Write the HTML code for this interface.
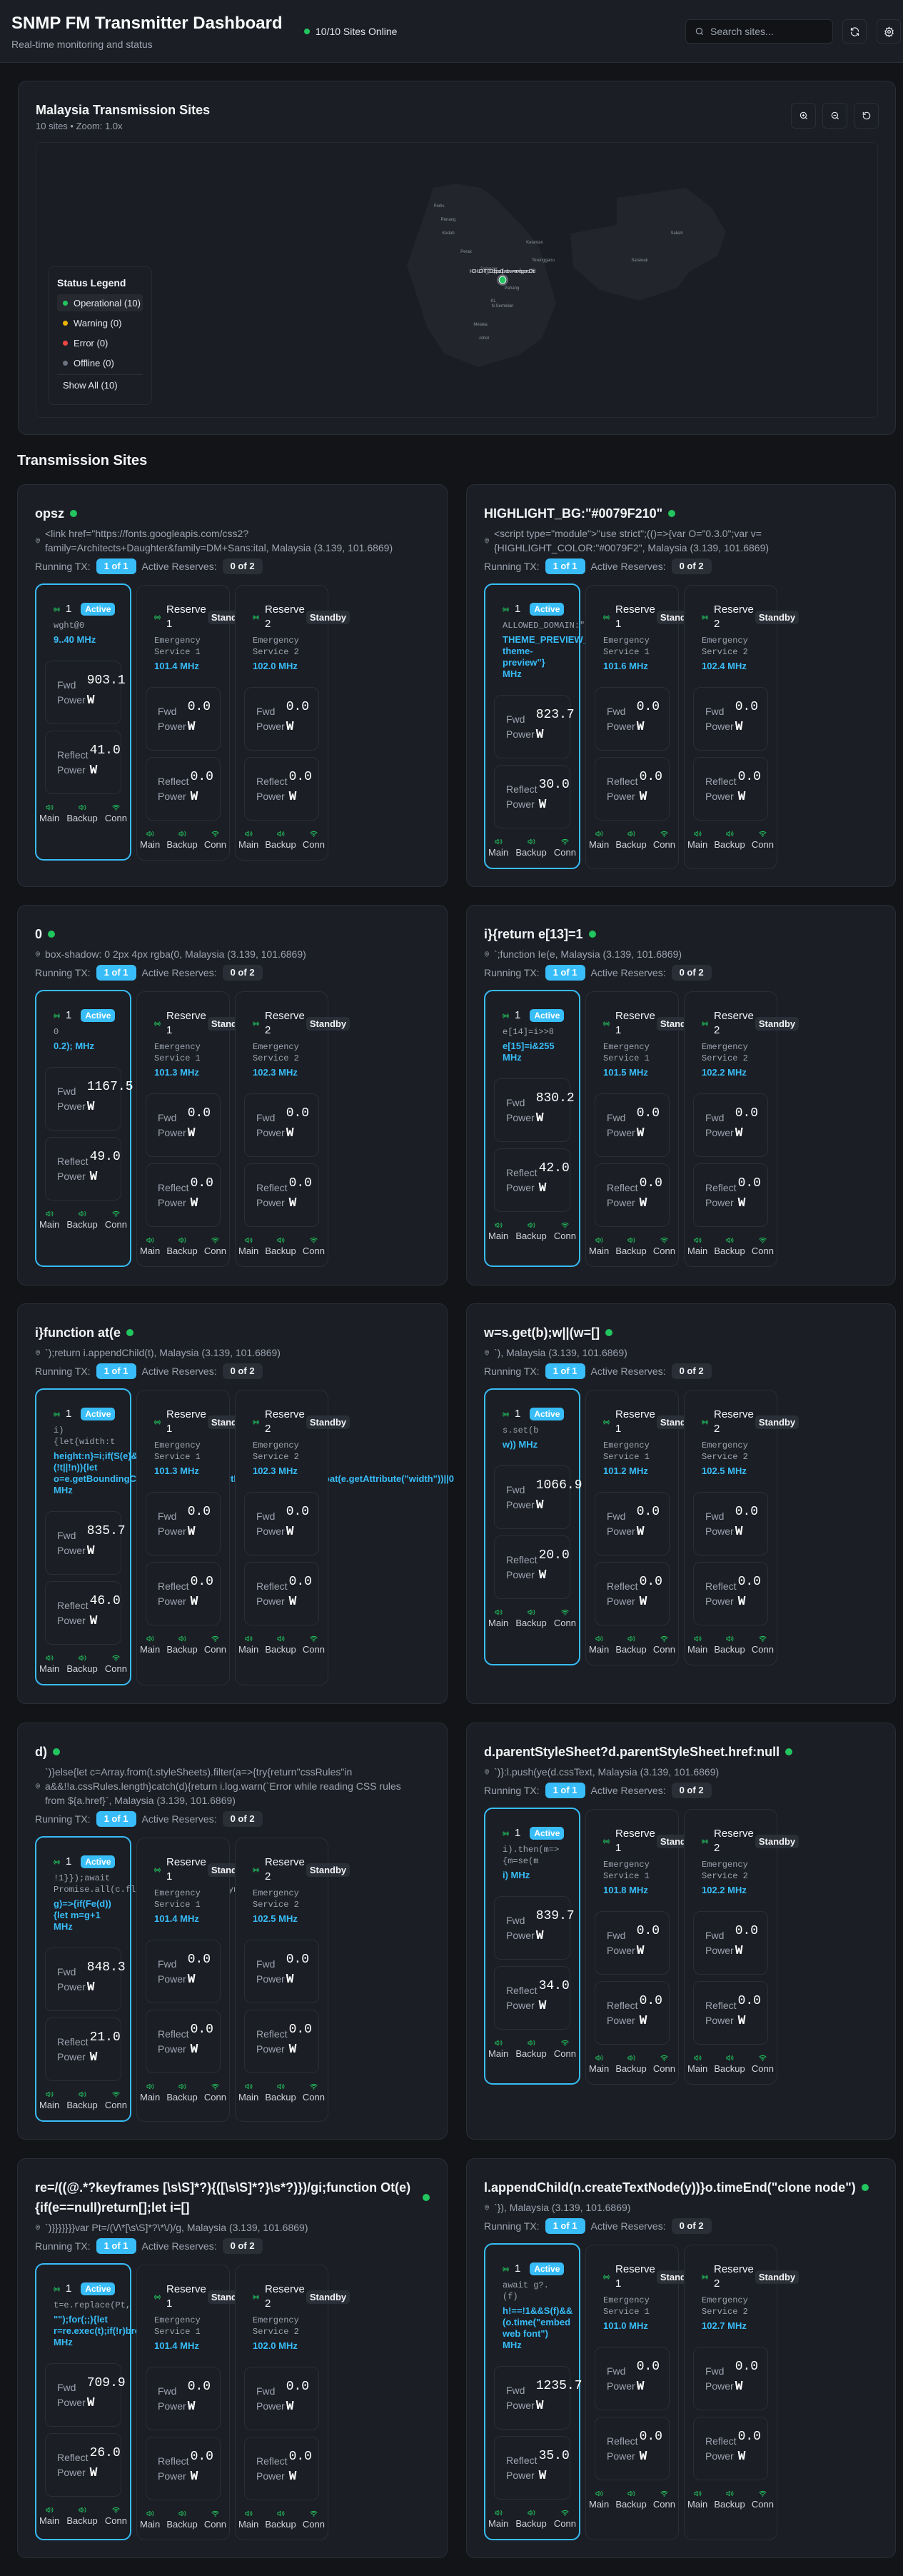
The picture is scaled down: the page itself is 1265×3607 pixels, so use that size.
<!DOCTYPE html>
<html><head><meta charset="utf-8">
<style>
*{box-sizing:border-box}
html,body{margin:0;padding:0}
body{width:1265px;height:3607px;background:#121418;font-family:"Liberation Sans",sans-serif;color:#f3f4f6;position:relative;overflow:hidden}
.mono{font-family:"Liberation Mono",monospace}
#hdr{position:absolute;left:0;top:0;width:1265px;height:88px;background:#1b1e25;border-bottom:1px solid #2a2e37}
#hdr h1{position:absolute;left:16px;top:17px;margin:0;font-size:24px;line-height:32px;font-weight:bold;color:#f9fafb;white-space:nowrap}
#hdr .sub{position:absolute;left:16px;top:52px;font-size:14px;line-height:20px;color:#9ca3af}
#hdr .onl{position:absolute;left:426px;top:35px;font-size:14px;line-height:18px;color:#e5e7eb;display:flex;align-items:center}
#hdr .onl i{width:8px;height:8px;border-radius:50%;background:#22c55e;margin-right:8px;display:inline-block}
.srch{position:absolute;left:960px;top:27px;width:207px;height:34px;background:#111317;border:1px solid #2a2e37;border-radius:6px;display:flex;align-items:center;padding-left:12px;font-size:14px;color:#9ca3af}
.srch svg{margin-right:8px}
.ibtn{position:absolute;top:27px;width:34px;height:34px;border:1px solid #2a2e37;border-radius:6px;background:#1b1e25;display:flex;align-items:center;justify-content:center}
.mapc{position:absolute;left:25px;top:113px;width:1230px;height:496px;background:#1b1e25;border:1px solid #2a2e37;border-radius:12px}
.mapc h2{position:absolute;left:24px;top:28px;margin:0;font-size:18px;line-height:24px;font-weight:bold;white-space:nowrap}
.mapc .ms{position:absolute;left:24px;top:55px;font-size:13px;line-height:16px;color:#9ca3af}
.zb{position:absolute;top:30px;width:35px;height:36px;border:1px solid #2a2e37;border-radius:6px;display:flex;align-items:center;justify-content:center}
.marea{position:absolute;left:24px;top:85px;width:1180px;height:386px;border:1px solid #252830;border-radius:8px;background:#1a1d23;overflow:hidden}
.leg{position:absolute;left:16px;top:173px;width:146px;height:194px;background:#1b1e25;border:1px solid #262a32;border-radius:8px;padding:10px 12px}
.leg b{display:block;font-size:14px;line-height:24px;margin-bottom:4px}
.li{display:flex;align-items:center;height:24px;font-size:13px;color:#e5e7eb;padding-left:8px;margin-bottom:4px;border-radius:4px}
.li i{width:7px;height:7px;border-radius:50%;display:inline-block;margin-right:8px}
.hs{position:absolute;left:24px;top:632px;font-size:20px;line-height:26px;font-weight:bold;color:#f3f4f6}
.card{position:absolute;background:#1b1e25;border:1px solid #2a2e37;border-radius:12px;padding:26px 24px 0 24px}
.ttl{display:flex;align-items:center;font-size:18px;font-weight:bold;line-height:28px;color:#f3f4f6}
.ttl .d{width:10px;height:10px;border-radius:50%;background:#22c55e;margin-left:8px;flex:none}
.loc{display:flex;align-items:center;margin-top:4px;font-size:14px;line-height:20px;color:#9ca3af}
.loc svg{flex:none;margin-right:6px}
.run{display:flex;align-items:center;height:26px;margin-top:3px;font-size:14px;color:#9ca3af;white-space:nowrap}
.b1,.b2{font-weight:bold;font-size:13px;height:22px;line-height:22px;padding:0 11px;border-radius:6px;margin:0 8px}
.b1{background:#38bdf8;color:#fff}
.b2{background:#2a2e37;color:#f3f4f6}
.txs{display:flex;gap:7px;margin-top:13px;align-items:stretch;margin-left:0}
.tx{position:relative;background:#1b1e25;border:1px solid #2a2e37;border-radius:12px;width:131px;padding:24px 12px 12px;flex:none}
.tx.act{border:2px solid #38bdf8;width:135px;padding-top:24px;margin-top:-2px}
.hd{display:flex;align-items:center;padding-left:12px;font-size:15px;line-height:20px;color:#f3f4f6;height:20px;white-space:nowrap}
.hd svg{flex:none;margin-right:8px}
.hd.r{height:40px;margin-top:-10px;margin-bottom:-10px}
.hd.r{margin:0}
.ab{background:#38bdf8;color:#fff;font-size:12px;font-weight:bold;line-height:18px;padding:0 6px;border-radius:5px;margin-left:13px}
.sb{background:#2a2e37;color:#f3f4f6;font-size:13px;font-weight:bold;line-height:19px;padding:0 5px;border-radius:5px;margin-left:2px}
.nm{padding-left:12px;margin-top:5px;font-family:"Liberation Mono",monospace;font-size:12px;line-height:16px;color:#9ca3af;white-space:nowrap}
.fq{padding-left:12px;margin-top:4px;font-size:13px;font-weight:bold;line-height:16px;color:#38bdf8;white-space:nowrap}
.pb{margin-top:21px;height:89px;border:1px solid #2a2e37;border-radius:10px;display:flex;align-items:center;padding-left:16px;white-space:nowrap}
.pb+.pb{margin-top:9px}
.pl{font-size:14px;line-height:21px;color:#9ca3af}
.pv{font-family:"Liberation Mono",monospace;font-size:18px;line-height:28px;color:#fff;margin-left:2px;margin-top:-6px}
.pv b{font-size:18px}
.st{display:flex;justify-content:space-between;margin:10px -8px 0}
.st div{text-align:center;font-size:13px;line-height:18px;color:#d1d5db}
.st svg{display:block;margin:3px auto 1px}
</style></head><body>

<svg width="0" height="0" style="position:absolute">
<defs>
<symbol id="rad" viewBox="0 0 24 24"><g fill="none" stroke="#22c55e" stroke-width="2.5" stroke-linecap="round"><circle cx="12" cy="12" r="2"/><path d="M16.2 7.8a6 6 0 0 1 0 8.4M7.8 16.2a6 6 0 0 1 0-8.4M19.1 4.9a10 10 0 0 1 0 14.2M4.9 19.1a10 10 0 0 1 0-14.2"/></g></symbol>
<symbol id="spk" viewBox="0 0 24 24"><g fill="none" stroke="#22c55e" stroke-width="2" stroke-linecap="round" stroke-linejoin="round"><path d="M11 5L6 9H2v6h4l5 4V5z"/><path d="M15.5 8.5a5 5 0 0 1 0 7M19 5a10 10 0 0 1 0 14"/></g></symbol>
<symbol id="wif" viewBox="0 0 24 24"><g fill="none" stroke="#22c55e" stroke-width="2.2" stroke-linecap="round"><path d="M5 12.5a10 10 0 0 1 14 0M8.5 16a5 5 0 0 1 7 0M2 9a15 15 0 0 1 20 0"/><circle cx="12" cy="19.5" r="0.8"/></g></symbol>
<symbol id="pin" viewBox="0 0 24 24"><g fill="none" stroke="#9ca3af" stroke-width="2"><path d="M20 10c0 6-8 12-8 12s-8-6-8-12a8 8 0 0 1 16 0z"/><circle cx="12" cy="10" r="3"/></g></symbol>
</defs></svg>

<div id="hdr">
<h1>SNMP FM Transmitter Dashboard</h1>
<div class="sub">Real-time monitoring and status</div>
<div class="onl"><i></i>10/10 Sites Online</div>
<div class="srch"><svg width="14" height="14" viewBox="0 0 24 24" fill="none" stroke="#9ca3af" stroke-width="2"><circle cx="11" cy="11" r="7"/><path d="M20 20l-4-4"/></svg>Search sites...</div>
<div class="ibtn" style="left:1180px"><svg width="15" height="15" viewBox="0 0 24 24" fill="none" stroke="#e5e7eb" stroke-width="2" stroke-linecap="round"><path d="M20 11a8 8 0 0 0-14.6-4.5M4 4v4h4M4 13a8 8 0 0 0 14.6 4.5M20 20v-4h-4"/></svg></div>
<div class="ibtn" style="left:1228px"><svg width="15" height="15" viewBox="0 0 24 24" fill="none" stroke="#e5e7eb" stroke-width="2"><circle cx="12" cy="12" r="3"/><path d="M12 2l2 3 3.5-1 .5 3.5 3 2-2 3 2 3-3 2-.5 3.5-3.5-1-2 3-2-3-3.5 1L6 18.5l-3-2 2-3-2-3 3-2L6.5 4 10 5z"/></svg></div>
</div>

<div class="mapc">
<h2>Malaysia Transmission Sites</h2>
<div class="ms">10 sites • Zoom: 1.0x</div>
<div class="zb" style="left:1082px"><svg width="14" height="14" viewBox="0 0 24 24" fill="none" stroke="#e5e7eb" stroke-width="2"><circle cx="11" cy="11" r="7"/><path d="M20 20l-4-4M11 8v6M8 11h6"/></svg></div>
<div class="zb" style="left:1126px"><svg width="14" height="14" viewBox="0 0 24 24" fill="none" stroke="#e5e7eb" stroke-width="2"><circle cx="11" cy="11" r="7"/><path d="M20 20l-4-4M8 11h6"/></svg></div>
<div class="zb" style="left:1170px"><svg width="14" height="14" viewBox="0 0 24 24" fill="none" stroke="#e5e7eb" stroke-width="2" stroke-linecap="round"><path d="M4 12a8 8 0 1 0 3-6.2M4 4v5h5"/></svg></div>
<div class="marea">
<svg width="1180" height="386" viewBox="50 199 1180 386" style="position:absolute;left:0;top:0">
<polygon points="606,262 637,256 673,262 694,278 735,320 754,344 778,423 758,473 726,496 669,513 621,494 597,456 569,371 597,290" fill="#22252c"/>
<polygon points="863,276 960,262 996,290 1016,324 1004,357 964,380 948,402 895,420 839,405 802,373 798,326 863,314" fill="#22252c"/>
<g font-family="Liberation Sans" font-size="6" fill="#8b9099" text-anchor="middle">
<text x="614" y="289">Perlis</text><text x="627" y="308">Penang</text><text x="627" y="327">Kedah</text><text x="748" y="340">Kelantan</text><text x="652" y="353">Perak</text><text x="760" y="365">Terengganu</text><text x="947" y="327">Sabah</text><text x="895" y="365">Sarawak</text><text x="684" y="377">Selangor</text><text x="716" y="404">Pahang</text><text x="690" y="422">KL</text><text x="703" y="429">N.Sembilan</text><text x="672" y="455">Melaka</text><text x="677" y="474">Johor</text>
</g>
<text x="657" y="381" font-family="Liberation Sans" font-size="7" fill="#e5e7eb" textLength="92">HIGHLIGHT_BG d) opsz 0 i}function w=s re=/ l.appendChild</text>
<circle cx="703" cy="391" r="7" fill="none" stroke="#9ca3af" stroke-width="1.5" opacity=".6"/>
<circle cx="703" cy="391" r="5" fill="#22c55e" stroke="#fff" stroke-width="1"/>
</svg>
<div class="leg">
<b>Status Legend</b>
<div class="li" style="background:#262930"><i style="background:#22c55e"></i>Operational (10)</div>
<div class="li"><i style="background:#eab308"></i>Warning (0)</div>
<div class="li"><i style="background:#ef4444"></i>Error (0)</div>
<div class="li"><i style="background:#6b7280"></i>Offline (0)</div>
<div style="border-top:1px solid #2a2e37;margin-top:2px;padding:7px 0 0 8px;font-size:13px;color:#e5e7eb">Show All (10)</div>
</div>
</div>
</div>

<div class="hs">Transmission Sites</div>

<!-- ROW 1 LEFT -->
<div class="card" style="left:24px;top:678px;width:603px;height:564px">
<div class="ttl">opsz<span class="d"></span></div>
<div class="loc"><svg width="8" height="8"><use href="#pin"/></svg><div>&lt;link href="https://fonts.googleapis.com/css2?<br>family=Architects+Daughter&amp;family=DM+Sans:ital, Malaysia (3.139, 101.6869)</div></div>
<div class="run">Running TX:<span class="b1">1 of 1</span>Active Reserves:<span class="b2">0 of 2</span></div>
<div class="txs">
<div class="tx act"><div class="hd"><svg width="9" height="9"><use href="#rad"/></svg>1<span class="ab">Active</span></div>
<div class="nm">wght@0</div><div class="fq">9..40 MHz</div>
<div class="pb"><div class="pl">Fwd<br>Power</div><div class="pv">903.1<br><b>W</b></div></div>
<div class="pb"><div class="pl">Reflect<br>Power</div><div class="pv">41.0<br><b>W</b></div></div>
<div class="st"><div><svg width="11" height="11"><use href="#spk"/></svg>Main</div><div><svg width="11" height="11"><use href="#spk"/></svg>Backup</div><div><svg width="11" height="11"><use href="#wif"/></svg>Conn</div></div></div>
<div class="tx"><div class="hd r"><svg width="9" height="9"><use href="#rad"/></svg><div>Reserve<br>1</div><span class="sb">Standby</span></div>
<div class="nm">Emergency<br>Service 1</div><div class="fq">101.4 MHz</div>
<div class="pb"><div class="pl">Fwd<br>Power</div><div class="pv">0.0<br><b>W</b></div></div>
<div class="pb"><div class="pl">Reflect<br>Power</div><div class="pv">0.0<br><b>W</b></div></div>
<div class="st"><div><svg width="11" height="11"><use href="#spk"/></svg>Main</div><div><svg width="11" height="11"><use href="#spk"/></svg>Backup</div><div><svg width="11" height="11"><use href="#wif"/></svg>Conn</div></div></div>
<div class="tx"><div class="hd r"><svg width="9" height="9"><use href="#rad"/></svg><div>Reserve<br>2</div><span class="sb">Standby</span></div>
<div class="nm">Emergency<br>Service 2</div><div class="fq">102.0 MHz</div>
<div class="pb"><div class="pl">Fwd<br>Power</div><div class="pv">0.0<br><b>W</b></div></div>
<div class="pb"><div class="pl">Reflect<br>Power</div><div class="pv">0.0<br><b>W</b></div></div>
<div class="st"><div><svg width="11" height="11"><use href="#spk"/></svg>Main</div><div><svg width="11" height="11"><use href="#spk"/></svg>Backup</div><div><svg width="11" height="11"><use href="#wif"/></svg>Conn</div></div></div>
</div></div>

<!-- ROW 1 RIGHT -->
<div class="card" style="left:653px;top:678px;width:602px;height:564px">
<div class="ttl">HIGHLIGHT_BG:"#0079F210"<span class="d"></span></div>
<div class="loc"><svg width="8" height="8"><use href="#pin"/></svg><div>&lt;script type="module"&gt;"use strict";(()=&gt;{var O="0.3.0";var v=<br>{HIGHLIGHT_COLOR:"#0079F2", Malaysia (3.139, 101.6869)</div></div>
<div class="run">Running TX:<span class="b1">1 of 1</span>Active Reserves:<span class="b2">0 of 2</span></div>
<div class="txs">
<div class="tx act"><div class="hd"><svg width="9" height="9"><use href="#rad"/></svg>1<span class="ab">Active</span></div>
<div class="nm">ALLOWED_DOMAIN:"replit.com"</div><div class="fq">THEME_PREVIEW_STYLE_ID:<br>theme-<br>preview"}<br>MHz</div>
<div class="pb"><div class="pl">Fwd<br>Power</div><div class="pv">823.7<br><b>W</b></div></div>
<div class="pb"><div class="pl">Reflect<br>Power</div><div class="pv">30.0<br><b>W</b></div></div>
<div class="st"><div><svg width="11" height="11"><use href="#spk"/></svg>Main</div><div><svg width="11" height="11"><use href="#spk"/></svg>Backup</div><div><svg width="11" height="11"><use href="#wif"/></svg>Conn</div></div></div>
<div class="tx"><div class="hd r"><svg width="9" height="9"><use href="#rad"/></svg><div>Reserve<br>1</div><span class="sb">Standby</span></div>
<div class="nm">Emergency<br>Service 1</div><div class="fq">101.6 MHz</div>
<div class="pb"><div class="pl">Fwd<br>Power</div><div class="pv">0.0<br><b>W</b></div></div>
<div class="pb"><div class="pl">Reflect<br>Power</div><div class="pv">0.0<br><b>W</b></div></div>
<div class="st"><div><svg width="11" height="11"><use href="#spk"/></svg>Main</div><div><svg width="11" height="11"><use href="#spk"/></svg>Backup</div><div><svg width="11" height="11"><use href="#wif"/></svg>Conn</div></div></div>
<div class="tx"><div class="hd r"><svg width="9" height="9"><use href="#rad"/></svg><div>Reserve<br>2</div><span class="sb">Standby</span></div>
<div class="nm">Emergency<br>Service 2</div><div class="fq">102.4 MHz</div>
<div class="pb"><div class="pl">Fwd<br>Power</div><div class="pv">0.0<br><b>W</b></div></div>
<div class="pb"><div class="pl">Reflect<br>Power</div><div class="pv">0.0<br><b>W</b></div></div>
<div class="st"><div><svg width="11" height="11"><use href="#spk"/></svg>Main</div><div><svg width="11" height="11"><use href="#spk"/></svg>Backup</div><div><svg width="11" height="11"><use href="#wif"/></svg>Conn</div></div></div>
</div></div>

<!-- ROW 2 LEFT -->
<div class="card" style="left:24px;top:1267px;width:603px;height:533px">
<div class="ttl">0<span class="d"></span></div>
<div class="loc"><svg width="8" height="8"><use href="#pin"/></svg><div>box-shadow: 0 2px 4px rgba(0, Malaysia (3.139, 101.6869)</div></div>
<div class="run">Running TX:<span class="b1">1 of 1</span>Active Reserves:<span class="b2">0 of 2</span></div>
<div class="txs">
<div class="tx act"><div class="hd"><svg width="9" height="9"><use href="#rad"/></svg>1<span class="ab">Active</span></div>
<div class="nm">0</div><div class="fq">0.2); MHz</div>
<div class="pb"><div class="pl">Fwd<br>Power</div><div class="pv">1167.5<br><b>W</b></div></div>
<div class="pb"><div class="pl">Reflect<br>Power</div><div class="pv">49.0<br><b>W</b></div></div>
<div class="st"><div><svg width="11" height="11"><use href="#spk"/></svg>Main</div><div><svg width="11" height="11"><use href="#spk"/></svg>Backup</div><div><svg width="11" height="11"><use href="#wif"/></svg>Conn</div></div></div>
<div class="tx"><div class="hd r"><svg width="9" height="9"><use href="#rad"/></svg><div>Reserve<br>1</div><span class="sb">Standby</span></div>
<div class="nm">Emergency<br>Service 1</div><div class="fq">101.3 MHz</div>
<div class="pb"><div class="pl">Fwd<br>Power</div><div class="pv">0.0<br><b>W</b></div></div>
<div class="pb"><div class="pl">Reflect<br>Power</div><div class="pv">0.0<br><b>W</b></div></div>
<div class="st"><div><svg width="11" height="11"><use href="#spk"/></svg>Main</div><div><svg width="11" height="11"><use href="#spk"/></svg>Backup</div><div><svg width="11" height="11"><use href="#wif"/></svg>Conn</div></div></div>
<div class="tx"><div class="hd r"><svg width="9" height="9"><use href="#rad"/></svg><div>Reserve<br>2</div><span class="sb">Standby</span></div>
<div class="nm">Emergency<br>Service 2</div><div class="fq">102.3 MHz</div>
<div class="pb"><div class="pl">Fwd<br>Power</div><div class="pv">0.0<br><b>W</b></div></div>
<div class="pb"><div class="pl">Reflect<br>Power</div><div class="pv">0.0<br><b>W</b></div></div>
<div class="st"><div><svg width="11" height="11"><use href="#spk"/></svg>Main</div><div><svg width="11" height="11"><use href="#spk"/></svg>Backup</div><div><svg width="11" height="11"><use href="#wif"/></svg>Conn</div></div></div>
</div></div>

<!-- ROW 2 RIGHT -->
<div class="card" style="left:653px;top:1267px;width:602px;height:533px">
<div class="ttl">i}{return e[13]=1<span class="d"></span></div>
<div class="loc"><svg width="8" height="8"><use href="#pin"/></svg><div>`;function Ie(e, Malaysia (3.139, 101.6869)</div></div>
<div class="run">Running TX:<span class="b1">1 of 1</span>Active Reserves:<span class="b2">0 of 2</span></div>
<div class="txs">
<div class="tx act"><div class="hd"><svg width="9" height="9"><use href="#rad"/></svg>1<span class="ab">Active</span></div>
<div class="nm">e[14]=i&gt;&gt;8</div><div class="fq">e[15]=i&amp;255<br>MHz</div>
<div class="pb"><div class="pl">Fwd<br>Power</div><div class="pv">830.2<br><b>W</b></div></div>
<div class="pb"><div class="pl">Reflect<br>Power</div><div class="pv">42.0<br><b>W</b></div></div>
<div class="st"><div><svg width="11" height="11"><use href="#spk"/></svg>Main</div><div><svg width="11" height="11"><use href="#spk"/></svg>Backup</div><div><svg width="11" height="11"><use href="#wif"/></svg>Conn</div></div></div>
<div class="tx"><div class="hd r"><svg width="9" height="9"><use href="#rad"/></svg><div>Reserve<br>1</div><span class="sb">Standby</span></div>
<div class="nm">Emergency<br>Service 1</div><div class="fq">101.5 MHz</div>
<div class="pb"><div class="pl">Fwd<br>Power</div><div class="pv">0.0<br><b>W</b></div></div>
<div class="pb"><div class="pl">Reflect<br>Power</div><div class="pv">0.0<br><b>W</b></div></div>
<div class="st"><div><svg width="11" height="11"><use href="#spk"/></svg>Main</div><div><svg width="11" height="11"><use href="#spk"/></svg>Backup</div><div><svg width="11" height="11"><use href="#wif"/></svg>Conn</div></div></div>
<div class="tx"><div class="hd r"><svg width="9" height="9"><use href="#rad"/></svg><div>Reserve<br>2</div><span class="sb">Standby</span></div>
<div class="nm">Emergency<br>Service 2</div><div class="fq">102.2 MHz</div>
<div class="pb"><div class="pl">Fwd<br>Power</div><div class="pv">0.0<br><b>W</b></div></div>
<div class="pb"><div class="pl">Reflect<br>Power</div><div class="pv">0.0<br><b>W</b></div></div>
<div class="st"><div><svg width="11" height="11"><use href="#spk"/></svg>Main</div><div><svg width="11" height="11"><use href="#spk"/></svg>Backup</div><div><svg width="11" height="11"><use href="#wif"/></svg>Conn</div></div></div>
</div></div>

<!-- ROW 3 LEFT -->
<div class="card" style="left:24px;top:1825px;width:603px;height:561px">
<div class="ttl">i}function at(e<span class="d"></span></div>
<div class="loc"><svg width="8" height="8"><use href="#pin"/></svg><div>`);return i.appendChild(t), Malaysia (3.139, 101.6869)</div></div>
<div class="run">Running TX:<span class="b1">1 of 1</span>Active Reserves:<span class="b2">0 of 2</span></div>
<div class="txs">
<div class="tx act"><div class="hd"><svg width="9" height="9"><use href="#rad"/></svg>1<span class="ab">Active</span></div>
<div class="nm">i)<br>{let{width:t</div><div class="fq">height:n}=i;if(S(e)&amp;&amp;<br>(!t||!n)){let<br>o=e.getBoundingClientRect();return{width:t||o.wi|dth||parseFloat(e.getAttribute("width"))||0<br>MHz</div>
<div class="pb"><div class="pl">Fwd<br>Power</div><div class="pv">835.7<br><b>W</b></div></div>
<div class="pb"><div class="pl">Reflect<br>Power</div><div class="pv">46.0<br><b>W</b></div></div>
<div class="st"><div><svg width="11" height="11"><use href="#spk"/></svg>Main</div><div><svg width="11" height="11"><use href="#spk"/></svg>Backup</div><div><svg width="11" height="11"><use href="#wif"/></svg>Conn</div></div></div>
<div class="tx"><div class="hd r"><svg width="9" height="9"><use href="#rad"/></svg><div>Reserve<br>1</div><span class="sb">Standby</span></div>
<div class="nm">Emergency<br>Service 1</div><div class="fq">101.3 MHz</div>
<div class="pb"><div class="pl">Fwd<br>Power</div><div class="pv">0.0<br><b>W</b></div></div>
<div class="pb"><div class="pl">Reflect<br>Power</div><div class="pv">0.0<br><b>W</b></div></div>
<div class="st"><div><svg width="11" height="11"><use href="#spk"/></svg>Main</div><div><svg width="11" height="11"><use href="#spk"/></svg>Backup</div><div><svg width="11" height="11"><use href="#wif"/></svg>Conn</div></div></div>
<div class="tx"><div class="hd r"><svg width="9" height="9"><use href="#rad"/></svg><div>Reserve<br>2</div><span class="sb">Standby</span></div>
<div class="nm">Emergency<br>Service 2</div><div class="fq">102.3 MHz</div>
<div class="pb"><div class="pl">Fwd<br>Power</div><div class="pv">0.0<br><b>W</b></div></div>
<div class="pb"><div class="pl">Reflect<br>Power</div><div class="pv">0.0<br><b>W</b></div></div>
<div class="st"><div><svg width="11" height="11"><use href="#spk"/></svg>Main</div><div><svg width="11" height="11"><use href="#spk"/></svg>Backup</div><div><svg width="11" height="11"><use href="#wif"/></svg>Conn</div></div></div>
</div></div>

<!-- ROW 3 RIGHT -->
<div class="card" style="left:653px;top:1825px;width:602px;height:561px">
<div class="ttl">w=s.get(b);w||(w=[]<span class="d"></span></div>
<div class="loc"><svg width="8" height="8"><use href="#pin"/></svg><div>`), Malaysia (3.139, 101.6869)</div></div>
<div class="run">Running TX:<span class="b1">1 of 1</span>Active Reserves:<span class="b2">0 of 2</span></div>
<div class="txs">
<div class="tx act"><div class="hd"><svg width="9" height="9"><use href="#rad"/></svg>1<span class="ab">Active</span></div>
<div class="nm">s.set(b</div><div class="fq">w)) MHz</div>
<div class="pb"><div class="pl">Fwd<br>Power</div><div class="pv">1066.9<br><b>W</b></div></div>
<div class="pb"><div class="pl">Reflect<br>Power</div><div class="pv">20.0<br><b>W</b></div></div>
<div class="st"><div><svg width="11" height="11"><use href="#spk"/></svg>Main</div><div><svg width="11" height="11"><use href="#spk"/></svg>Backup</div><div><svg width="11" height="11"><use href="#wif"/></svg>Conn</div></div></div>
<div class="tx"><div class="hd r"><svg width="9" height="9"><use href="#rad"/></svg><div>Reserve<br>1</div><span class="sb">Standby</span></div>
<div class="nm">Emergency<br>Service 1</div><div class="fq">101.2 MHz</div>
<div class="pb"><div class="pl">Fwd<br>Power</div><div class="pv">0.0<br><b>W</b></div></div>
<div class="pb"><div class="pl">Reflect<br>Power</div><div class="pv">0.0<br><b>W</b></div></div>
<div class="st"><div><svg width="11" height="11"><use href="#spk"/></svg>Main</div><div><svg width="11" height="11"><use href="#spk"/></svg>Backup</div><div><svg width="11" height="11"><use href="#wif"/></svg>Conn</div></div></div>
<div class="tx"><div class="hd r"><svg width="9" height="9"><use href="#rad"/></svg><div>Reserve<br>2</div><span class="sb">Standby</span></div>
<div class="nm">Emergency<br>Service 2</div><div class="fq">102.5 MHz</div>
<div class="pb"><div class="pl">Fwd<br>Power</div><div class="pv">0.0<br><b>W</b></div></div>
<div class="pb"><div class="pl">Reflect<br>Power</div><div class="pv">0.0<br><b>W</b></div></div>
<div class="st"><div><svg width="11" height="11"><use href="#spk"/></svg>Main</div><div><svg width="11" height="11"><use href="#spk"/></svg>Backup</div><div><svg width="11" height="11"><use href="#wif"/></svg>Conn</div></div></div>
</div></div>

<!-- ROW 4 LEFT -->
<div class="card" style="left:24px;top:2412px;width:603px;height:584px">
<div class="ttl">d)<span class="d"></span></div>
<div class="loc"><svg width="8" height="8"><use href="#pin"/></svg><div>`)}else{let c=Array.from(t.styleSheets).filter(a=&gt;{try{return"cssRules"in<br>a&amp;&amp;!!a.cssRules.length}catch(d){return i.log.warn(`Error while reading CSS rules<br>from ${a.href}`, Malaysia (3.139, 101.6869)</div></div>
<div class="run">Running TX:<span class="b1">1 of 1</span>Active Reserves:<span class="b2">0 of 2</span></div>
<div class="txs">
<div class="tx act"><div class="hd"><svg width="9" height="9"><use href="#rad"/></svg>1<span class="ab">Active</span></div>
<div class="nm">!1}});await<br>Promise.all(c.flatMap(async(d,g)=&gt;ync(d</div><div class="fq">g)=&gt;{if(Fe(d))<br>{let m=g+1<br>MHz</div>
<div class="pb"><div class="pl">Fwd<br>Power</div><div class="pv">848.3<br><b>W</b></div></div>
<div class="pb"><div class="pl">Reflect<br>Power</div><div class="pv">21.0<br><b>W</b></div></div>
<div class="st"><div><svg width="11" height="11"><use href="#spk"/></svg>Main</div><div><svg width="11" height="11"><use href="#spk"/></svg>Backup</div><div><svg width="11" height="11"><use href="#wif"/></svg>Conn</div></div></div>
<div class="tx"><div class="hd r"><svg width="9" height="9"><use href="#rad"/></svg><div>Reserve<br>1</div><span class="sb">Standby</span></div>
<div class="nm">Emergency<br>Service 1</div><div class="fq">101.4 MHz</div>
<div class="pb"><div class="pl">Fwd<br>Power</div><div class="pv">0.0<br><b>W</b></div></div>
<div class="pb"><div class="pl">Reflect<br>Power</div><div class="pv">0.0<br><b>W</b></div></div>
<div class="st"><div><svg width="11" height="11"><use href="#spk"/></svg>Main</div><div><svg width="11" height="11"><use href="#spk"/></svg>Backup</div><div><svg width="11" height="11"><use href="#wif"/></svg>Conn</div></div></div>
<div class="tx"><div class="hd r"><svg width="9" height="9"><use href="#rad"/></svg><div>Reserve<br>2</div><span class="sb">Standby</span></div>
<div class="nm">Emergency<br>Service 2</div><div class="fq">102.5 MHz</div>
<div class="pb"><div class="pl">Fwd<br>Power</div><div class="pv">0.0<br><b>W</b></div></div>
<div class="pb"><div class="pl">Reflect<br>Power</div><div class="pv">0.0<br><b>W</b></div></div>
<div class="st"><div><svg width="11" height="11"><use href="#spk"/></svg>Main</div><div><svg width="11" height="11"><use href="#spk"/></svg>Backup</div><div><svg width="11" height="11"><use href="#wif"/></svg>Conn</div></div></div>
</div></div>

<!-- ROW 4 RIGHT -->
<div class="card" style="left:653px;top:2412px;width:602px;height:584px">
<div class="ttl">d.parentStyleSheet?d.parentStyleSheet.href:null<span class="d"></span></div>
<div class="loc"><svg width="8" height="8"><use href="#pin"/></svg><div>`)}:l.push(ye(d.cssText, Malaysia (3.139, 101.6869)</div></div>
<div class="run">Running TX:<span class="b1">1 of 1</span>Active Reserves:<span class="b2">0 of 2</span></div>
<div class="txs">
<div class="tx act"><div class="hd"><svg width="9" height="9"><use href="#rad"/></svg>1<span class="ab">Active</span></div>
<div class="nm">i).then(m=&gt;<br>{m=se(m</div><div class="fq">i) MHz</div>
<div class="pb"><div class="pl">Fwd<br>Power</div><div class="pv">839.7<br><b>W</b></div></div>
<div class="pb"><div class="pl">Reflect<br>Power</div><div class="pv">34.0<br><b>W</b></div></div>
<div class="st"><div><svg width="11" height="11"><use href="#spk"/></svg>Main</div><div><svg width="11" height="11"><use href="#spk"/></svg>Backup</div><div><svg width="11" height="11"><use href="#wif"/></svg>Conn</div></div></div>
<div class="tx"><div class="hd r"><svg width="9" height="9"><use href="#rad"/></svg><div>Reserve<br>1</div><span class="sb">Standby</span></div>
<div class="nm">Emergency<br>Service 1</div><div class="fq">101.8 MHz</div>
<div class="pb"><div class="pl">Fwd<br>Power</div><div class="pv">0.0<br><b>W</b></div></div>
<div class="pb"><div class="pl">Reflect<br>Power</div><div class="pv">0.0<br><b>W</b></div></div>
<div class="st"><div><svg width="11" height="11"><use href="#spk"/></svg>Main</div><div><svg width="11" height="11"><use href="#spk"/></svg>Backup</div><div><svg width="11" height="11"><use href="#wif"/></svg>Conn</div></div></div>
<div class="tx"><div class="hd r"><svg width="9" height="9"><use href="#rad"/></svg><div>Reserve<br>2</div><span class="sb">Standby</span></div>
<div class="nm">Emergency<br>Service 2</div><div class="fq">102.2 MHz</div>
<div class="pb"><div class="pl">Fwd<br>Power</div><div class="pv">0.0<br><b>W</b></div></div>
<div class="pb"><div class="pl">Reflect<br>Power</div><div class="pv">0.0<br><b>W</b></div></div>
<div class="st"><div><svg width="11" height="11"><use href="#spk"/></svg>Main</div><div><svg width="11" height="11"><use href="#spk"/></svg>Backup</div><div><svg width="11" height="11"><use href="#wif"/></svg>Conn</div></div></div>
</div></div>

<!-- ROW 5 LEFT -->
<div class="card" style="left:24px;top:3022px;width:603px;height:560px">
<div class="ttl"><div style="width:540px">re=/((@.*?keyframes [\s\S]*?){([\s\S]*?}\s*?)})/gi;function Ot(e){if(e==null)return[];let i=[]</div><span class="d"></span></div>
<div class="loc"><svg width="8" height="8"><use href="#pin"/></svg><div>`)}}}}}}}var Pt=/(\/\*[\s\S]*?\*\/)/g, Malaysia (3.139, 101.6869)</div></div>
<div class="run">Running TX:<span class="b1">1 of 1</span>Active Reserves:<span class="b2">0 of 2</span></div>
<div class="txs">
<div class="tx act"><div class="hd"><svg width="9" height="9"><use href="#rad"/></svg>1<span class="ab">Active</span></div>
<div class="nm">t=e.replace(Pt,</div><div class="fq">"");for(;;){let<br>r=re.exec(t);if(!r)break;let[,n,la<br>MHz</div>
<div class="pb"><div class="pl">Fwd<br>Power</div><div class="pv">709.9<br><b>W</b></div></div>
<div class="pb"><div class="pl">Reflect<br>Power</div><div class="pv">26.0<br><b>W</b></div></div>
<div class="st"><div><svg width="11" height="11"><use href="#spk"/></svg>Main</div><div><svg width="11" height="11"><use href="#spk"/></svg>Backup</div><div><svg width="11" height="11"><use href="#wif"/></svg>Conn</div></div></div>
<div class="tx"><div class="hd r"><svg width="9" height="9"><use href="#rad"/></svg><div>Reserve<br>1</div><span class="sb">Standby</span></div>
<div class="nm">Emergency<br>Service 1</div><div class="fq">101.4 MHz</div>
<div class="pb"><div class="pl">Fwd<br>Power</div><div class="pv">0.0<br><b>W</b></div></div>
<div class="pb"><div class="pl">Reflect<br>Power</div><div class="pv">0.0<br><b>W</b></div></div>
<div class="st"><div><svg width="11" height="11"><use href="#spk"/></svg>Main</div><div><svg width="11" height="11"><use href="#spk"/></svg>Backup</div><div><svg width="11" height="11"><use href="#wif"/></svg>Conn</div></div></div>
<div class="tx"><div class="hd r"><svg width="9" height="9"><use href="#rad"/></svg><div>Reserve<br>2</div><span class="sb">Standby</span></div>
<div class="nm">Emergency<br>Service 2</div><div class="fq">102.0 MHz</div>
<div class="pb"><div class="pl">Fwd<br>Power</div><div class="pv">0.0<br><b>W</b></div></div>
<div class="pb"><div class="pl">Reflect<br>Power</div><div class="pv">0.0<br><b>W</b></div></div>
<div class="st"><div><svg width="11" height="11"><use href="#spk"/></svg>Main</div><div><svg width="11" height="11"><use href="#spk"/></svg>Backup</div><div><svg width="11" height="11"><use href="#wif"/></svg>Conn</div></div></div>
</div></div>

<!-- ROW 5 RIGHT -->
<div class="card" style="left:653px;top:3022px;width:602px;height:560px">
<div class="ttl">l.appendChild(n.createTextNode(y))}o.timeEnd("clone node")<span class="d"></span></div>
<div class="loc"><svg width="8" height="8"><use href="#pin"/></svg><div>`}), Malaysia (3.139, 101.6869)</div></div>
<div class="run">Running TX:<span class="b1">1 of 1</span>Active Reserves:<span class="b2">0 of 2</span></div>
<div class="txs">
<div class="tx act"><div class="hd"><svg width="9" height="9"><use href="#rad"/></svg>1<span class="ab">Active</span></div>
<div class="nm">await g?.<br>(f)</div><div class="fq">h!==!1&amp;&amp;S(f)&amp;&amp;<br>(o.time("embed<br>web font")<br>MHz</div>
<div class="pb"><div class="pl">Fwd<br>Power</div><div class="pv">1235.7<br><b>W</b></div></div>
<div class="pb"><div class="pl">Reflect<br>Power</div><div class="pv">35.0<br><b>W</b></div></div>
<div class="st"><div><svg width="11" height="11"><use href="#spk"/></svg>Main</div><div><svg width="11" height="11"><use href="#spk"/></svg>Backup</div><div><svg width="11" height="11"><use href="#wif"/></svg>Conn</div></div></div>
<div class="tx"><div class="hd r"><svg width="9" height="9"><use href="#rad"/></svg><div>Reserve<br>1</div><span class="sb">Standby</span></div>
<div class="nm">Emergency<br>Service 1</div><div class="fq">101.0 MHz</div>
<div class="pb"><div class="pl">Fwd<br>Power</div><div class="pv">0.0<br><b>W</b></div></div>
<div class="pb"><div class="pl">Reflect<br>Power</div><div class="pv">0.0<br><b>W</b></div></div>
<div class="st"><div><svg width="11" height="11"><use href="#spk"/></svg>Main</div><div><svg width="11" height="11"><use href="#spk"/></svg>Backup</div><div><svg width="11" height="11"><use href="#wif"/></svg>Conn</div></div></div>
<div class="tx"><div class="hd r"><svg width="9" height="9"><use href="#rad"/></svg><div>Reserve<br>2</div><span class="sb">Standby</span></div>
<div class="nm">Emergency<br>Service 2</div><div class="fq">102.7 MHz</div>
<div class="pb"><div class="pl">Fwd<br>Power</div><div class="pv">0.0<br><b>W</b></div></div>
<div class="pb"><div class="pl">Reflect<br>Power</div><div class="pv">0.0<br><b>W</b></div></div>
<div class="st"><div><svg width="11" height="11"><use href="#spk"/></svg>Main</div><div><svg width="11" height="11"><use href="#spk"/></svg>Backup</div><div><svg width="11" height="11"><use href="#wif"/></svg>Conn</div></div></div>
</div></div>

</body></html>
